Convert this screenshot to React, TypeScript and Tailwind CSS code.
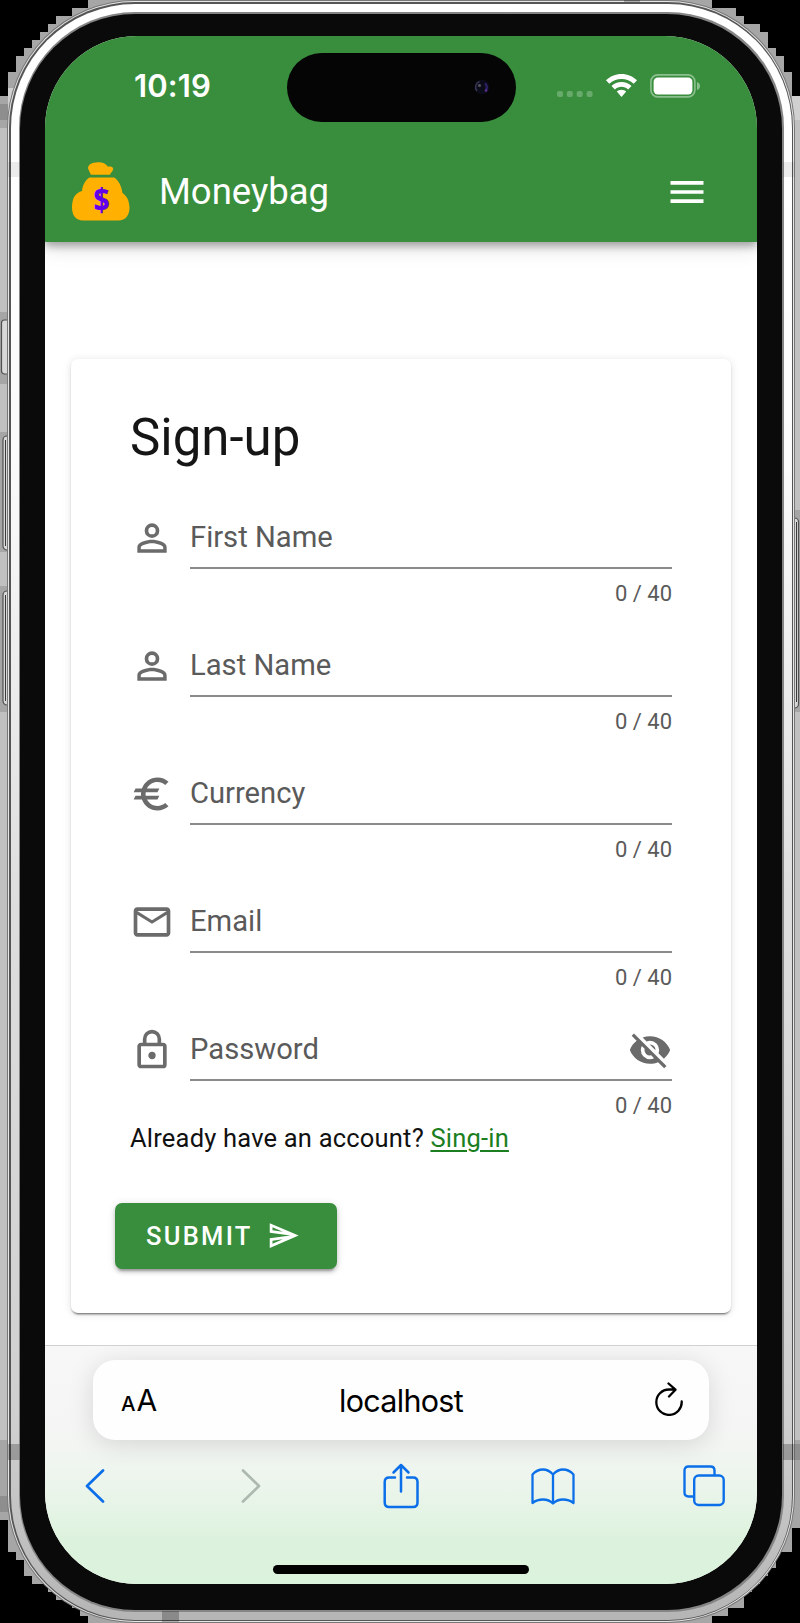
import type { ReactNode } from "react";

const icons = {
  account:
    "M12,4A4,4 0 0,1 16,8A4,4 0 0,1 12,12A4,4 0 0,1 8,8A4,4 0 0,1 12,4M12,6A2,2 0 0,0 10,8A2,2 0 0,0 12,10A2,2 0 0,0 14,8A2,2 0 0,0 12,6M12,13C14.67,13 20,14.33 20,17V20H4V17C4,14.33 9.33,13 12,13M12,14.9C9.03,14.9 5.9,16.36 5.9,17V18.1H18.1V17C18.1,16.36 14.97,14.9 12,14.9Z",
  euro: "M15,18.5C12.49,18.5 10.32,17.08 9.24,15H15L16,13H8.58C8.53,12.67 8.5,12.34 8.5,12C8.5,11.66 8.53,11.33 8.58,11H15L16,9H9.24C10.32,6.92 12.5,5.5 15,5.5C16.61,5.5 18.09,6.09 19.23,7.07L21,5.3C19.41,3.87 17.3,3 15,3C11.08,3 7.76,5.51 6.52,9H3L2,11H6.06C6.02,11.33 6,11.66 6,12C6,12.34 6.02,12.67 6.06,13H3L2,15H6.52C7.76,18.49 11.08,21 15,21C17.31,21 19.41,20.13 21,18.7L19.23,16.93C18.09,17.91 16.62,18.5 15,18.5Z",
  email:
    "M22 6C22 4.9 21.1 4 20 4H4C2.9 4 2 4.9 2 6V18C2 19.1 2.9 20 4 20H20C21.1 20 22 19.1 22 18V6M20 6L12 11L4 6H20M20 18H4V8L12 13L20 8V18Z",
  lock: "M12,17C10.89,17 10,16.1 10,15C10,13.89 10.89,13 12,13A2,2 0 0,1 14,15A2,2 0 0,1 12,17M18,20V10H6V20H18M18,8A2,2 0 0,1 20,10V20A2,2 0 0,1 18,22H6C4.89,22 4,21.1 4,20V10C4,8.89 4.89,8 6,8H7V6A5,5 0 0,1 12,1A5,5 0 0,1 17,6V8H18M12,3A3,3 0 0,0 9,6V8H15V6A3,3 0 0,0 12,3Z",
  eyeOff:
    "M11.83,9L15,12.16C15,12.11 15,12.05 15,12A3,3 0 0,0 12,9C11.94,9 11.89,9 11.83,9M7.53,9.8L9.08,11.35C9.03,11.56 9,11.77 9,12A3,3 0 0,0 12,15C12.22,15 12.44,14.97 12.65,14.92L14.2,16.47C13.53,16.8 12.79,17 12,17A5,5 0 0,1 7,12C7,11.21 7.2,10.47 7.53,9.8M2,4.27L4.28,6.55L4.73,7C3.08,8.3 1.78,10 1,12C2.73,16.39 7,19.5 12,19.5C13.55,19.5 15.03,19.2 16.38,18.66L16.81,19.08L19.73,22L21,20.73L3.27,3M12,7A5,5 0 0,1 17,12C17,12.64 16.87,13.26 16.64,13.82L19.57,16.75C21.07,15.5 22.27,13.86 23,12C21.27,7.61 17,4.5 12,4.5C10.6,4.5 9.26,4.75 8,5.2L10.17,7.35C10.74,7.13 11.35,7 12,7Z",
  menu: "M3,6H21V8H3V6M3,11H21V13H3V11M3,16H21V18H3V16Z",
  send: "M4 6.03L11.5 9.25L4 8.25L4 6.03M11.5 14.75L4 17.97V15.75L11.5 14.75M2 3L2 10L17 12L2 14L2 21L23 12L2 3Z",
};

function Icon({ d, className }: { d: string; className: string }) {
  return (
    <svg viewBox="0 0 24 24" fill="currentColor" className={className}>
      <path d={d} />
    </svg>
  );
}

function Backdrop() {
  return (
    <svg viewBox="0 0 800 1623" className="absolute inset-0 h-[1623px] w-[800px]" shapeRendering="crispEdges">
      <path
        fill="#a6a6a6"
        d="M88 0V8H72V16H56V24H48V32H40V40H32V48H24V56H16V72H8V96H0V1520H8V1552H16V1560H24V1576H32V1584H48V1592H56V1600H72V1608H80V1616H88V1623H712V1616H728V1608H744V1592H752V1584H760V1576H768V1568H776V1552H792V1528H800V96H792V72H784V56H776V48H768V32H760V24H744V16H736V8H712V0Z"
      />
      <path fill="#c0c0c0" d="M0 128H8V312H0ZM0 384H8V432H0ZM0 552H8V586H0ZM0 712H8V1440H0ZM792 104H800V510H792ZM792 712H800V1440H792Z" />
      <path fill="#d0d0d0" d="M792 96H800V120H792ZM8 88H16V112H8Z" />
      <path fill="#8e8e8e" d="M0 1496H8V1512H0ZM792 1444H800V1460H792ZM0 104H8V120H0Z" />
      <g shapeRendering="auto" fill="#d8d8d8" stroke="#505050" strokeWidth="1.2">
        <rect x="1.5" y="320" width="10" height="54" rx="3" />
        <rect x="3" y="436" width="10" height="114" rx="4" />
        <rect x="3" y="591" width="10" height="114" rx="4" />
        <rect x="788" y="518" width="10.5" height="190" rx="4" />
      </g>
      <path stroke="#3a3a3a" strokeWidth="1.5" d="M5.5 440V546M5.5 595V701M796.5 522V702" />
    </svg>
  );
}

function AntennaBands() {
  return (
    <svg viewBox="0 0 800 1623" className="pointer-events-none absolute inset-0 h-[1623px] w-[800px]">
      <path fill="#000" fillOpacity="0.24" d="M8 1444H19.500V1460H8ZM783 1444H794.500V1460H783ZM162 1611H179V1622H162Z" />
      <path fill="#000" fillOpacity="0.07" d="M8 162H19.500V177H8ZM783 162H794.500V177H783Z" />
      <path fill="#000" fillOpacity="0.25" d="M624 0H640V2H624Z" />
    </svg>
  );
}

function StatusBar() {
  return (
    <div className="flex h-[104px] items-start">
      <div className="mt-[31px] ml-[89px] w-[153px] font-['Inter'] text-[31px] leading-[37px] font-semibold tracking-[0.1px] text-white">
        10:19
      </div>
      <div className="mt-[16.5px] flex h-[69.5px] w-[228.5px] items-center justify-end rounded-full bg-[#050505] pr-[26px]">
        <svg viewBox="0 0 16 16" className="size-4">
          <circle cx="8" cy="8" r="7.5" fill="#0c0b18" />
          <path d="M5.5 2.5A6 6 0 0 0 3 12" fill="none" stroke="#343452" strokeWidth="1.6" />
          <circle cx="5.5" cy="6.5" r="1.5" fill="#55565f" />
          <path d="M11 4.5A5 5 0 0 1 12 11" fill="none" stroke="#2c2166" strokeWidth="2.4" />
          <circle cx="12" cy="11.5" r="1.3" fill="#5d3292" />
        </svg>
      </div>
      <svg viewBox="0 0 36 6" className="mt-[55px] ml-[41.5px] h-[6px] w-[36px]" fill="#68aa6b">
        <rect width="6" height="6" rx="2" />
        <rect x="9.8" width="6" height="6" rx="2" />
        <rect x="19.7" width="6" height="6" rx="2" />
        <rect x="29.6" width="6" height="6" rx="2" />
      </svg>
      <svg viewBox="0 0 31 23" className="mt-[38px] ml-[13px] h-[23px] w-[31px]" fill="#fff">
        <path d="M15.5 0C21.500 0 27 2.300 31 6.300L27.700 9.700C24.500 6.600 20.200 4.900 15.500 4.900S6.500 6.600 3.300 9.700L0 6.300C4 2.300 9.500 0 15.500 0Z" />
        <path d="M15.500 8C19.200 8 22.900 9.500 25.500 12L22.100 15.400C20.300 13.700 18 12.700 15.500 12.700S10.700 13.700 8.900 15.400L5.500 12C8.100 9.500 11.800 8 15.500 8Z" />
        <path d="M15.500 15.800C17.300 15.800 19 16.500 20.200 17.500L15.500 23L10.800 17.500C12 16.500 13.700 15.800 15.500 15.800Z" />
      </svg>
      <svg viewBox="0 0 50 24" className="mt-[37.500px] ml-[13px] h-[24px] w-[50px]">
        <rect x="0.900" y="0.900" width="44" height="22" rx="6.800" fill="none" stroke="#8bbf8d" strokeWidth="1.600" />
        <rect x="3.600" y="3.500" width="38.800" height="16.900" rx="4.200" fill="#fff" />
        <path d="M47 8Q50 9 50 12T47 16Z" fill="#8bbf8d" />
      </svg>
    </div>
  );
}

function MoneybagLogo() {
  return (
    <svg viewBox="0 0 58 59" className="h-[59px] w-[58px]">
      <path
        fill="#ffb000"
        d="M19 13L16.200 7C15.300 2.500 20 .5 26 .2C30.500 0 33.500 1.500 35.500 4.200C37 4.700 40 4 41 6C42 8.300 38.800 10.500 38 12.800H19Z"
      />
      <path
        fill="#ffb000"
        d="M17.500 15.500H42C46.500 18 49.500 24 50.500 31C55 34 57.500 39 57.500 46C57.500 53 53.500 58.500 46.500 58.500H11C4 58.500 0 53.500 0 45.500C0 36 3.500 30.500 10 29C10.500 23 13.500 18 17.500 15.500Z"
      />
      <text
        transform="translate(29.6 49) scale(0.88 1)"
        textAnchor="middle"
        className="font-['Noto_Sans',sans-serif] text-[32px] font-extrabold"
        fill="#6200ea"
      >
        $
      </text>
    </svg>
  );
}

function AppBar() {
  return (
    <div className="flex h-[102px] items-start pr-[48px] pl-[26.500px]">
      <div className="mt-[22px]">
        <MoneybagLogo />
      </div>
      <h1 className="mt-[30px] ml-[29.500px] flex-1 text-[36.500px] leading-[44px] font-normal text-white">Moneybag</h1>
      <button className="mt-[30px]">
        <Icon d={icons.menu} className="size-[44px] text-white" />
      </button>
    </div>
  );
}

function Field({ icon, label, trailing }: { icon: string; label: string; trailing?: ReactNode }) {
  return (
    <div className="flex h-[128px] w-[542px] items-start">
      <Icon d={icon} className="-ml-[0.500px] size-[44px] text-[#6b6b6b]" />
      <div className="ml-[16.500px] flex-1">
        <div className="flex h-[53px] items-start justify-between border-b-2 border-[#8a8a8a]">
          <label className="text-[29.200px] leading-[43px] text-[#5a5a5a]">{label}</label>
          {trailing}
        </div>
        <div className="mt-[8px] text-right text-[22px] leading-[33px] text-[#5a5a5a]">0 / 40</div>
      </div>
    </div>
  );
}

function SignUpCard() {
  return (
    <section className="mt-[117px] ml-[26px] h-[954px] w-[660px] rounded-[7px] bg-white pt-[46px] pl-[59px] shadow-[0_3px_2px_-2px_rgba(0,0,0,0.45),0_2px_2px_rgba(0,0,0,0.14),0_1px_8px_rgba(0,0,0,0.12)]">
      <h2 className="h-[111px] text-[51px] leading-[66px] text-[#151515]">Sign-up</h2>
      <div className="h-[600px]">
        <Field icon={icons.account} label="First Name" />
        <Field icon={icons.account} label="Last Name" />
        <Field icon={icons.euro} label="Currency" />
        <Field icon={icons.email} label="Email" />
        <Field icon={icons.lock} label="Password" trailing={<Icon d={icons.eyeOff} className="size-[44px] text-[#6b6b6b]" />} />
      </div>
      <p className="mt-[4px] text-[25.500px] leading-[36px] tracking-[0.200px] text-[#111]">
        Already have an account?{" "}
        <a className="text-[#1b7f22] underline decoration-2 underline-offset-[3px]">Sing-in</a>
      </p>
      <button className="mt-[47px] -ml-[15px] flex h-[66px] w-[222px] items-center rounded-[7px] bg-[#388e3c] pl-[31px] text-[25.500px] font-medium tracking-[2.280px] text-white shadow-[0_5px_2px_-3px_rgba(0,0,0,0.2),0_3px_4px_rgba(0,0,0,0.18),0_1px_8px_rgba(0,0,0,0.12)]">
        SUBMIT
        <Icon d={icons.send} className="-mt-[2px] ml-[14px] size-[33px]" />
      </button>
    </section>
  );
}

function BrowserBar() {
  return (
    <div className="mt-[32px] h-[239px] overflow-hidden border-t border-[#cfd2cf] bg-[linear-gradient(180deg,#f7f7f7_0%,#f3f5f3_42%,#ebf5eb_60%,#dcf2dd_82%,#dbf2dc_100%)]">
      <div className="mt-[14px] ml-[48px] flex h-[80px] w-[616px] items-center rounded-[22px] bg-[#fefefe] font-['Inter'] text-black shadow-[0_4px_26px_rgba(0,0,0,0.13)]">
        <div className="w-[98px] pt-[4px] pl-[28px] text-[30px] leading-[40px]">
          <span className="text-[20.500px] font-medium">A</span>
          <span className="ml-[1px]">A</span>
        </div>
        <div className="flex-1 pt-[1px] text-center text-[30.500px] leading-[40px] tracking-[-0.700px]">localhost</div>
        <div className="flex w-[98px] justify-end pr-[26.500px]">
          <svg viewBox="0 0 28 34" className="-mt-[2px] h-[34px] w-[28px]" fill="none" stroke="#000" strokeWidth="2.300" strokeLinecap="round" strokeLinejoin="round">
            <path d="M26.700 19.500A12.700 12.700 0 1 1 14 7.500H20M13.500 1.500L20.500 7.700L14 14.500" />
          </svg>
        </div>
      </div>
      <div className="mt-[22px] flex h-[46px] items-start text-[#0b6fe9]">
        <svg viewBox="0 0 20 34" className="mt-[7px] ml-[39.500px] h-[34px] w-[20px]" fill="none" stroke="currentColor" strokeWidth="2.700" strokeLinecap="round" strokeLinejoin="round">
          <path d="M18 1.500L2 17L18 32.500" />
        </svg>
        <svg viewBox="0 0 20 34" className="mt-[7px] ml-[136px] h-[34px] w-[20px] text-[#adb8ae]" fill="none" stroke="currentColor" strokeWidth="2.700" strokeLinecap="round" strokeLinejoin="round">
          <path d="M2 1.500L18 17L2 32.500" />
        </svg>
        <svg viewBox="0 0 36 46" className="mt-[0.500px] ml-[122px] h-[46px] w-[36px]" fill="none" stroke="currentColor" strokeWidth="2.500" strokeLinecap="round" strokeLinejoin="round">
          <path d="M12 14.500H6.200Q1.700 14.500 1.700 19V39.500Q1.700 44 6.200 44H30Q34.500 44 34.500 39.500V19Q34.500 14.500 30 14.500H24M18 28.500V2M10.500 9.500L18 2L25.500 9.500" />
        </svg>
        <svg viewBox="0 0 44 38" className="mt-[5.500px] ml-[112.500px] h-[38px] w-[44px]" fill="none" stroke="currentColor" strokeWidth="2.300" strokeLinecap="round" strokeLinejoin="round">
          <path d="M22 6.500Q17.500 1.500 12 1.500Q6 1.500 1.500 6.500V35Q6 31.500 12 31.500Q18 31.500 22 35.500Q26 31.500 32 31.500Q38 31.500 42.500 35V6.500Q38 1.500 32 1.500Q26.500 1.500 22 6.500V35" />
        </svg>
        <svg viewBox="0 0 42 42" className="mt-[3px] ml-[108px] h-[42px] w-[42px]" fill="none" stroke="currentColor" strokeWidth="2.400">
          <path d="M11 31.500H5.500Q1.500 31.500 1.500 27.500V5.500Q1.500 1.500 5.500 1.500H27.500Q31.500 1.500 31.500 5.500V10" />
          <rect x="11.200" y="10.500" width="29.500" height="29.500" rx="4.500" />
        </svg>
      </div>
      <div className="mx-auto mt-[57px] h-[9px] w-[256px] rounded-full bg-black" />
    </div>
  );
}

export default function App() {
  return (
    <main className="relative h-[1623px] w-[800px] overflow-hidden bg-black font-['Roboto',sans-serif]">
      <Backdrop />
      <div className="relative ml-[7px] h-[1623px] w-[788px] rounded-[128px] bg-[#777] p-px">
        <div className="h-full rounded-[127px] bg-[#e6e6e6] p-px">
          <div className="h-full rounded-[126px] bg-[#555] p-[1.500px]">
            <div className="h-full rounded-[124px] bg-[linear-gradient(180deg,#fff_0%,#fbfbfb_28%,#dedede_55%,#cfcfcf_88%,#b5b5b5_100%)] px-[8px] pt-[8.500px] pb-[8px]">
              <div className="h-full rounded-[116px] bg-[#858585] p-[1.500px]">
                <div className="h-full rounded-[115px] bg-[#0a0a0a] px-[25px] pt-[22.500px] pb-[25px]">
                  <div className="h-[1548px] w-[712px] overflow-hidden rounded-[92px] bg-white">
                    <header className="h-[206px] bg-[#388e3c] shadow-[0_4px_8px_rgba(0,0,0,0.32),0_8px_18px_rgba(0,0,0,0.1)]">
                      <StatusBar />
                      <AppBar />
                    </header>
                    <SignUpCard />
                    <BrowserBar />
                  </div>
                </div>
              </div>
            </div>
          </div>
        </div>
      </div>
      <AntennaBands />
    </main>
  );
}
